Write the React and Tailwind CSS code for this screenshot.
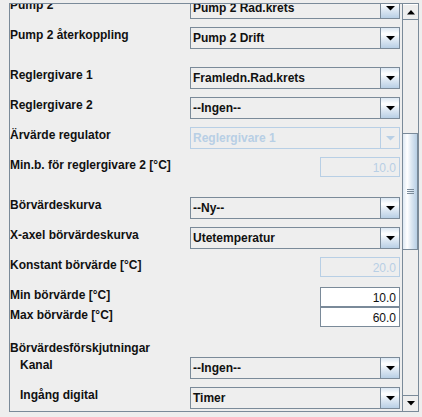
import React from "react";

const GRAD =
  "bg-[linear-gradient(to_bottom,#dde8f3_0%,#ffffff_30%,#dde8f3_60%,#b8cfe5_100%)]";

function Arrow({ color = "#000000", up = false, w = 9 }) {
  const pts = up ? `0,4.5 ${w},4.5 ${w / 2},0` : `0,0 ${w},0 ${w / 2},4.5`;
  return (
    <svg width={w} height="5" viewBox={`0 0 ${w} 5`}>
      <polygon points={pts} fill={color} />
    </svg>
  );
}

function Combo({ value, disabled = false }) {
  return (
    <div
      className={`w-[210px] h-[22px] flex border bg-[#eeeeee] ${
        disabled ? "border-[#b8cfe5]" : "border-[#7a8a99]"
      }`}
    >
      <div
        className={`flex-1 flex items-center pl-[2px] font-bold leading-[14px] ${
          disabled ? "text-[#b8cfe5]" : "text-[#111111]"
        }`}
      >
        {value}
      </div>
      <div
        className={`w-[19px] flex items-center justify-center border-l ${
          disabled ? "border-[#b8cfe5] bg-[#eeeeee]" : `border-[#7a8a99] ${GRAD}`
        }`}
      >
        <Arrow color={disabled ? "#b8cfe5" : "#000000"} />
      </div>
    </div>
  );
}

function Field({ value, disabled = false }) {
  return (
    <div
      className={`w-[80px] h-[20px] border pt-[3px] pr-[3px] text-right leading-[14px] ${
        disabled
          ? "border-[#b8cfe5] bg-[#eeeeee] text-[#b8cfe5]"
          : "border-[#7a8a99] bg-white text-[#111111]"
      }`}
    >
      {value}
    </div>
  );
}

function Row({ label, indent = false, h = "h-[22px]", mt, children }) {
  return (
    <div className={`flex ${h} ${mt}`}>
      <div
        className={`w-[180px] shrink-0 mt-[1px] leading-[14px] font-bold text-[#111111] whitespace-nowrap ${
          indent ? "pl-[10px]" : ""
        }`}
      >
        {label}
      </div>
      <div className="w-[210px] flex justify-end">{children}</div>
    </div>
  );
}

export default function App() {
  return (
    <div className="w-[422px] h-[417px] bg-[#eeeeee] pl-[9px] pt-[3px] font-['Liberation_Sans',Arial,sans-serif] text-[12px]">
      <div className="w-[410px] h-[409px] border border-[#7a8a99] flex">
        <div className="w-[392px] h-full overflow-hidden">
          <div className="mt-[-7px] flex flex-col">
            <Row label="Pump 2" mt="mt-0">
              <Combo value="Pump 2 Rad.krets" />
            </Row>
            <Row label="Pump 2 återkoppling" mt="mt-[8px]">
              <Combo value="Pump 2 Drift" />
            </Row>
            <Row label="Reglergivare 1" mt="mt-[18px]">
              <Combo value="Framledn.Rad.krets" />
            </Row>
            <Row label="Reglergivare 2" mt="mt-[8px]">
              <Combo value="--Ingen--" />
            </Row>
            <Row label="Ärvärde regulator" mt="mt-[8px]">
              <Combo value="Reglergivare 1" disabled />
            </Row>
            <Row label="Min.b. för reglergivare 2 [°C]" h="h-[20px]" mt="mt-[8px]">
              <Field value="10.0" disabled />
            </Row>
            <Row label="Börvärdeskurva" mt="mt-[20px]">
              <Combo value="--Ny--" />
            </Row>
            <Row label="X-axel börvärdeskurva" mt="mt-[8px]">
              <Combo value="Utetemperatur" />
            </Row>
            <Row label="Konstant börvärde [°C]" h="h-[20px]" mt="mt-[8px]">
              <Field value="20.0" disabled />
            </Row>
            <Row label="Min börvärde [°C]" h="h-[20px]" mt="mt-[10px]">
              <Field value="10.0" />
            </Row>
            <Row label="Max börvärde [°C]" h="h-[20px]" mt="mt-0">
              <Field value="60.0" />
            </Row>
            <div className="mt-[14px] h-[14px] leading-[14px] font-bold text-[#111111]">
              Börvärdesförskjutningar
            </div>
            <Row label="Kanal" indent mt="mt-[2px]">
              <Combo value="--Ingen--" />
            </Row>
            <Row label="Ingång digital" indent mt="mt-[8px]">
              <Combo value="Timer" />
            </Row>
          </div>
        </div>
        <div className="w-[16px] h-full border-l border-[#7a8a99] flex flex-col bg-[#eeeeee]">
          <div className="h-[16px] border-b border-[#7a8a99] flex items-center justify-center border-t border-t-white">
            <Arrow up w={8} />
          </div>
          <div className="flex-1 flex flex-col">
            <div className="h-[113px]" />
            <div className="h-[117px] border border-[#7a8a99] border-l-0 bg-[linear-gradient(to_right,#dde8f3_0%,#ffffff_30%,#dde8f3_60%,#b8cfe5_100%)] flex flex-col items-center justify-center gap-[1px]">
              <div className="w-[7px] h-[1px] bg-[#7a8a99]" />
              <div className="w-[7px] h-[1px] bg-[#7a8a99]" />
              <div className="w-[7px] h-[1px] bg-[#7a8a99]" />
            </div>
          </div>
          <div className="h-[16px] border-t border-[#7a8a99] flex items-center justify-center">
            <Arrow w={8} />
          </div>
        </div>
      </div>
    </div>
  );
}
